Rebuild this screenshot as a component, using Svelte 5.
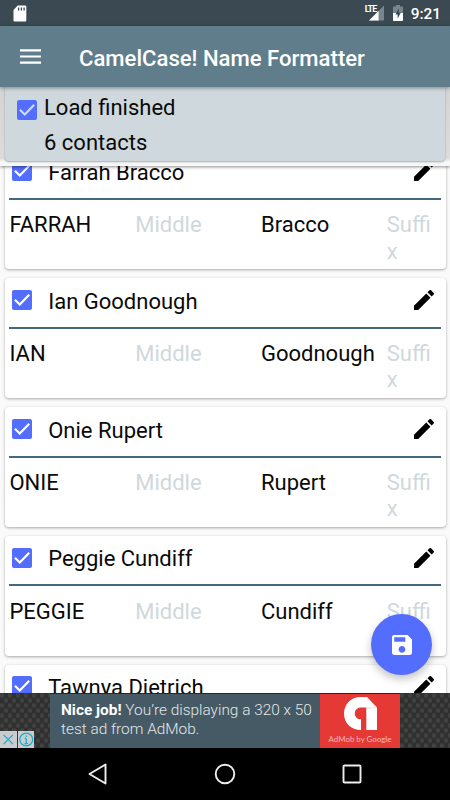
<script lang="ts">
  interface Contact {
    name: string;
    first: string;
    middle: string;
    last: string;
    suffix: string;
    checked: boolean;
  }

  let allChecked = $state(true);
  let contacts: Contact[] = $state([
    { name: 'Farrah Bracco', first: 'FARRAH', middle: '', last: 'Bracco', suffix: '', checked: true },
    { name: 'Ian Goodnough', first: 'IAN', middle: '', last: 'Goodnough', suffix: '', checked: true },
    { name: 'Onie Rupert', first: 'ONIE', middle: '', last: 'Rupert', suffix: '', checked: true },
    { name: 'Peggie Cundiff', first: 'PEGGIE', middle: '', last: 'Cundiff', suffix: '', checked: true },
    { name: 'Tawnya Dietrich', first: 'TAWNYA', middle: '', last: 'Dietrich', suffix: '', checked: true },
  ]);

  function toggleAll() {
    allChecked = !allChecked;
    for (const c of contacts) c.checked = allChecked;
  }
</script>

{#snippet checkbox(checked: boolean, toggle: () => void)}
  <button class="checkbox" class:off={!checked} aria-label="Select" onclick={toggle}>
    <svg viewBox="0 0 20 20">
      {#if checked}<path d="M2.900 9.700l4.900 4.800 9.400-9.700" />{/if}
    </svg>
  </button>
{/snippet}

<div class="screen">
  <div class="status">
    <svg class="sd" viewBox="0 0 14 17">
      <path d="M4.700.5H12a1.300 1.300 0 0 1 1.300 1.300v13.400a1.300 1.300 0 0 1-1.300 1.300H1.800A1.300 1.300 0 0 1 .5 15.200V5z" fill="#fff" />
      <path d="M5.600 2.600v3M8.400 2.600v3M11.100 2.600v3" stroke="#37474f" stroke-width="1.300" />
    </svg>
    <div class="signal">
      <span>LTE</span>
      <svg viewBox="0 0 16 16">
        <path d="M16 0v16H0z" fill="#77858c" />
        <path d="M10.200 5.800V16H0z" fill="#fff" />
      </svg>
    </div>
    <svg class="battery" viewBox="0 0 10 16">
      <path d="M3 0h4v1.600h2.200a.8.8 0 0 1 .8.8V9H0V2.400a.8.8 0 0 1 .8-.8H3z" fill="#77858c" />
      <path d="M0 8h10v7.200a.8.8 0 0 1-.8.8H.8a.8.8 0 0 1-.8-.8z" fill="#fff" />
      <path d="M5.800 3.500L2.400 9.600h2.200v4L7.800 7.700H5.800z" fill="#37474f" />
    </svg>
    <span class="clock">9:21</span>
  </div>

  <header class="toolbar">
    <button class="menu" aria-label="Menu">
      <svg viewBox="0 0 21 15"><path d="M0 1.300h21M0 7.500h21M0 13.700h21" /></svg>
    </button>
    <h1>CamelCase! Name Formatter</h1>
  </header>

  <main>
    <div class="summary">
      <div class="summary-card">
        {@render checkbox(allChecked, toggleAll)}
        <div class="summary-text">
          <p>Load finished</p>
          <p>6 contacts</p>
        </div>
      </div>
    </div>

    <div class="list">
      <div class="cards">
        {#each contacts as contact}
          <article class="card">
            <div class="card-head">
              {@render checkbox(contact.checked, () => (contact.checked = !contact.checked))}
              <span class="name">{contact.name}</span>
              <svg class="pencil" viewBox="3 3 18 18">
                <path d="M3 17.250V21h3.750L17.810 9.940l-3.750-3.750L3 17.250zM20.710 7.040c.39-.39.39-1.020 0-1.410l-2.340-2.340c-.39-.39-1.020-.39-1.410 0l-1.830 1.830 3.750 3.750 1.830-1.830z" />
              </svg>
            </div>
            <div class="fields">
              <span>{contact.first}</span>
              <span class:hint={!contact.middle}>{contact.middle || 'Middle'}</span>
              <span>{contact.last}</span>
              <span class="suffix" class:hint={!contact.suffix}>{contact.suffix || 'Suffix'}</span>
            </div>
          </article>
        {/each}
      </div>
    </div>

    <button class="fab" aria-label="Save">
      <svg viewBox="3 3 18 18">
        <path d="M17 3H5c-1.110 0-2 .9-2 2v14c0 1.100.89 2 2 2h14c1.100 0 2-.9 2-2V7l-4-4zm-5 16c-1.660 0-3-1.340-3-3s1.340-3 3-3 3 1.340 3 3-1.340 3-3 3zm3-10H5V5h10v4z" />
      </svg>
    </button>
  </main>

  <div class="ad">
    <svg class="mesh" aria-hidden="true">
      <defs>
        <pattern id="mesh" width="8" height="10" patternUnits="userSpaceOnUse">
          <rect width="8" height="10" fill="#303030" />
          <circle cx="2" cy="2.500" r="2.200" fill="#414141" />
          <circle cx="6" cy="7.500" r="2.200" fill="#414141" />
        </pattern>
      </defs>
      <rect width="100%" height="100%" fill="url(#mesh)" />
    </svg>
    <div class="banner">
      <p><b>Nice job!</b> You’re displaying a 320 x 50 test ad from AdMob.</p>
      <div class="admob">
        <svg viewBox="0 0 33 33">
          <path d="M16.500 0H23l10 10.500V33H22.300V10.500H17c-3.700 0-6.200 2.500-6.200 5.900s2.500 5.900 6.200 5.900V33C7 33 0 26 0 16.700S7 0 16.500 0z" fill="#fff" />
          <path d="M22.300 10.500H33L22.300 12z" fill="#ddd" />
        </svg>
        <span>AdMob by <b>Google</b></span>
      </div>
    </div>
    <div class="choices">
      <svg viewBox="0 0 16 16"><path d="M3.500 3.500l9 9M12.500 3.500l-9 9" /></svg>
      <svg viewBox="0 0 16 16"><circle cx="8" cy="8" r="6.200" /><path d="M8 7v5M8 4v1.500M6.500 7H8M6.300 12h3.400" /></svg>
    </div>
  </div>

  <nav>
    <svg viewBox="0 0 22 22"><path d="M18.500 1.500v19L2.500 11z" /></svg>
    <svg viewBox="0 0 22 22"><circle cx="11" cy="11" r="9.300" /></svg>
    <svg viewBox="0 0 22 22"><rect x="2.500" y="2.500" width="17" height="17" rx="1" /></svg>
  </nav>
</div>

<style>
  .screen {
    display: flex;
    flex-direction: column;
    width: 450px;
    height: 800px;
    overflow: hidden;
    background: #fafafa;
    color: #0a0a0a;
    font-family: Roboto, 'Liberation Sans', sans-serif;
    font-size: 22px;
  }
  button {
    border: none;
    padding: 0;
    background: none;
  }
  svg {
    display: block;
  }
  p {
    margin: 0;
  }
  .status {
    display: flex;
    align-items: center;
    flex: none;
    height: 26px;
    box-sizing: border-box;
    padding: 0 9px 0 13px;
    background: #3b4a52;
    color: #fff;
  }
  .sd {
    width: 14px;
    height: 17px;
    margin-right: auto;
  }
  .signal {
    display: flex;
    align-items: flex-start;
    margin-right: 9px;
  }
  .signal span {
    width: 4px;
    font-size: 9px;
    font-weight: 700;
    line-height: 8px;
    letter-spacing: -1px;
    white-space: nowrap;
    z-index: 1;
  }
  .signal svg {
    width: 15px;
    height: 16px;
  }
  .battery {
    width: 10px;
    height: 16px;
    margin-right: 8px;
  }
  .clock {
    font-size: 15.4px;
    font-weight: 500;
    line-height: 26px;
    padding-top: 2px;
  }
  .toolbar {
    display: flex;
    align-items: center;
    flex: none;
    height: 61px;
    padding-left: 20px;
    background: #607d8b;
    color: #fff;
    z-index: 2;
    box-shadow: 0 1px 4px rgba(0, 0, 0, 0.4);
  }
  .menu {
    margin-right: 38px;
  }
  .menu svg {
    width: 21px;
    height: 15px;
    stroke: #fff;
    stroke-width: 2.2;
  }
  h1 {
    margin: 0;
    padding-top: 3px;
    font-size: 22.1px;
    font-weight: 500;
    white-space: nowrap;
  }
  main {
    position: relative;
    display: flex;
    flex-direction: column;
    flex: 1;
    min-height: 0;
  }
  .summary {
    flex: none;
    height: 79px;
    box-sizing: border-box;
    padding: 0 5px 5px;
    background: linear-gradient(#d4d4d4, #dcdcdc 90%, #f8f8f8 95%);
    box-shadow: 0 1px 3px rgba(0, 0, 0, 0.45);
    z-index: 1;
  }
  .summary-card {
    display: flex;
    align-items: flex-start;
    height: 74px;
    box-sizing: border-box;
    padding: 3px 12px;
    border-radius: 0 0 4px 4px;
    background: #cfd8dd;
    box-shadow: 0 1px 2px rgba(0, 0, 0, 0.3);
  }
  .summary-card .checkbox {
    margin-top: 10px;
  }
  .summary-text {
    margin-left: 7px;
    line-height: 35px;
  }
  .checkbox {
    flex: none;
    width: 20px;
    height: 20px;
    border-radius: 2px;
    background: #536dfe;
  }
  .checkbox.off {
    background: none;
    box-shadow: inset 0 0 0 2px #757575;
  }
  .checkbox svg {
    fill: none;
    stroke: #fff;
    stroke-width: 2.2;
  }
  .summary-card .checkbox svg {
    stroke: #d3daea;
  }
  .list {
    flex: 1;
    min-height: 0;
    overflow: hidden;
  }
  .cards {
    display: grid;
    gap: 9.2px;
    margin-top: -16.4px;
    padding: 0 4.5px;
  }
  .card {
    height: 119.6px;
    box-sizing: border-box;
    padding: 0 4.5px;
    border-radius: 4px;
    background: #fff;
    box-shadow: 0 1px 3px rgba(0, 0, 0, 0.33);
  }
  .card-head {
    display: flex;
    align-items: center;
    height: 50.4px;
    box-sizing: border-box;
    padding: 0 7px 5px 3px;
    border-bottom: 2px solid #45697b;
  }
  .name {
    flex: 1;
    margin: 2.6px 0 0 16.2px;
  }
  .pencil {
    width: 20px;
    height: 20px;
    fill: #000;
  }
  .fields {
    display: grid;
    grid-template-columns: 125.8px 125.8px 125.8px 46px;
    padding: 12.3px 0 0 0.4px;
    line-height: 26.4px;
  }
  .hint {
    color: #cfd8dc;
  }
  .suffix {
    word-break: break-all;
  }
  .fab {
    position: absolute;
    right: 18px;
    bottom: 18px;
    display: grid;
    place-items: center;
    width: 61px;
    height: 61px;
    border-radius: 50%;
    background: #536dfe;
    box-shadow: 0 4px 9px rgba(0, 0, 0, 0.24);
    z-index: 2;
  }
  .fab svg {
    width: 20px;
    height: 20px;
    fill: #fff;
  }
  .ad {
    position: relative;
    display: flex;
    justify-content: center;
    flex: none;
    height: 55px;
    z-index: 3;
  }
  .mesh {
    position: absolute;
    inset: 0;
    width: 100%;
    height: 100%;
  }
  .banner {
    position: relative;
    display: flex;
    width: 350px;
    box-sizing: border-box;
    border-top: 1px solid #1d292f;
    background: #455a64;
    color: #e3e8ea;
  }
  .banner p {
    width: 270px;
    box-sizing: border-box;
    padding: 7px 0 0 11px;
    font-size: 15.4px;
    font-weight: 300;
    line-height: 18.5px;
  }
  .banner p b {
    color: #fff;
    font-weight: 700;
  }
  .admob {
    display: flex;
    flex-direction: column;
    align-items: center;
    width: 80px;
    padding-top: 3px;
    background: #e53935;
  }
  .admob svg {
    width: 33px;
    height: 33px;
  }
  .admob span {
    margin-top: 3px;
    color: #f7b5b3;
    font-family: Lato, sans-serif;
    font-size: 7.9px;
    line-height: 12px;
    white-space: nowrap;
  }
  .admob b {
    font-weight: 500;
  }
  .choices {
    position: absolute;
    left: 0;
    bottom: 0;
    display: flex;
    gap: 1px;
  }
  .choices svg {
    width: 16.5px;
    height: 17px;
    background: #ccc;
    fill: none;
    stroke: #15aed0;
    stroke-width: 1.2;
  }
  nav {
    display: flex;
    justify-content: space-between;
    align-items: center;
    flex: none;
    height: 52px;
    padding: 0 87px;
    background: #000;
  }
  nav svg {
    width: 22px;
    height: 22px;
    fill: none;
    stroke: #eee;
    stroke-width: 1.9;
    stroke-linejoin: round;
  }
</style>
